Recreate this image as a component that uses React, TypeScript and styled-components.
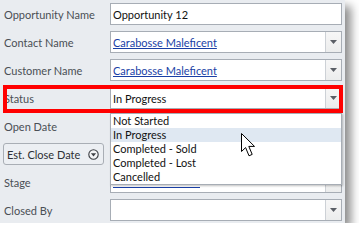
import React from "react";
import styled, { createGlobalStyle } from "styled-components";

const Global = createGlobalStyle`
  html, body { margin: 0; padding: 0; background: #ffffff; }
  body { font-family: "Lato", "Open Sans", sans-serif; }
`;

const Panel = styled.div`
  position: relative;
  width: 345px;
  height: 223px;
  box-sizing: border-box;
  background: #e9ecf0;
  box-shadow: 6px 6px 9px rgba(0, 0, 0, 0.45);
  padding: 3px 3px 0 3px;
  display: grid;
  grid-template-columns: 107px 232px;
  grid-auto-rows: 22px;
  row-gap: 6px;
  align-items: center;
  font-size: 11px;
`;

const Label = styled.div`
  color: #4a4f55;
  white-space: nowrap;
  padding-left: 1px;
`;

const Field = styled.div`
  height: 22px;
  box-sizing: border-box;
  border: 1px solid #a7adb5;
  background: #ffffff;
  display: flex;
  align-items: center;
`;

const Value = styled.span<{ $link?: boolean }>`
  flex: 1;
  padding-left: 2px;
  color: ${(p) => (p.$link ? "#1a3fa6" : "#111")};
  text-decoration: ${(p) => (p.$link ? "underline" : "none")};
  white-space: nowrap;
  overflow: hidden;
`;

const HiddenLink = styled.span`
  display: block;
  width: 87px;
  height: 11px;
  margin-left: 2px;
  border-bottom: 1px solid #1a3fa6;
`;

const DropButton = styled.div`
  width: 15px;
  height: 100%;
  border-left: 1px solid #cdd1d6;
  background: linear-gradient(#f7f7f7, #eceded);
  display: flex;
  align-items: center;
  justify-content: center;
`;

const Spacer = styled.div`
  flex: 1;
`;

const DateButton = styled.div`
  width: 101px;
  height: 22px;
  box-sizing: border-box;
  border: 1px solid #a9aeb5;
  border-radius: 3px;
  background: #eceff3;
  display: flex;
  align-items: center;
  justify-content: space-between;
  padding: 0 4px 0 3px;
  color: #2d3035;
  white-space: nowrap;
`;

const Highlight = styled.div`
  position: absolute;
  left: 3px;
  top: 85px;
  width: 340px;
  height: 28px;
  box-sizing: border-box;
  border: 4px solid #ff0000;
  pointer-events: none;
`;

const List = styled.div`
  position: absolute;
  left: 110px;
  top: 113px;
  width: 232px;
  height: 72px;
  box-sizing: border-box;
  border: 1px solid #a7adb5;
  background: #ffffff;
  box-shadow: 1px 1px 2px rgba(0, 0, 0, 0.25);
  display: flex;
  flex-direction: column;
`;

const Item = styled.div<{ $active?: boolean }>`
  height: 14px;
  line-height: 14px;
  padding-left: 2px;
  color: #111;
  background: ${(p) => (p.$active ? "#dfe8f2" : "transparent")};
  white-space: nowrap;
`;

const Cursor = styled.svg`
  position: absolute;
  left: 241px;
  top: 133px;
`;

const Arrow = () => (
  <svg width="7" height="4" viewBox="0 0 7 4">
    <path d="M0 0 H7 L3.5 4 Z" fill="#5b5f66" />
  </svg>
);

const Combo = ({ children }: { children?: React.ReactNode }) => (
  <Field>
    {children ?? <Spacer />}
    <DropButton>
      <Arrow />
    </DropButton>
  </Field>
);

export default function App() {
  return (
    <>
      <Global />
      <Panel>
        <Label>Opportunity Name</Label>
        <Field>
          <Value>Opportunity 12</Value>
        </Field>

        <Label>Contact Name</Label>
        <Combo>
          <Value $link>Carabosse Maleficent</Value>
        </Combo>

        <Label>Customer Name</Label>
        <Combo>
          <Value $link>Carabosse Maleficent</Value>
        </Combo>

        <Label>Status</Label>
        <Combo>
          <Value>In Progress</Value>
        </Combo>

        <Label>Open Date</Label>
        <Field />

        <DateButton>
          <span>Est. Close Date</span>
          <svg width="11" height="11" viewBox="0 0 11 11">
            <circle cx="5.5" cy="5.5" r="4.7" fill="#f4f5f7" stroke="#3c3f44" strokeWidth="1.1" />
            <path d="M2.9 4.2 H8.1 L5.5 7.4 Z" fill="#3c3f44" />
          </svg>
        </DateButton>
        <Field />

        <Label>Stage</Label>
        <Combo>
          <Spacer>
            <HiddenLink />
          </Spacer>
        </Combo>

        <Label>Closed By</Label>
        <Combo />

        <Highlight />

        <List>
          <Item>Not Started</Item>
          <Item $active>In Progress</Item>
          <Item>Completed - Sold</Item>
          <Item>Completed - Lost</Item>
          <Item>Cancelled</Item>
        </List>

        <Cursor width="17" height="26" viewBox="0 0 17 26">
          <path
            d="M0.5 0.5 L0.5 18.5 L4.6 14.6 L8 22.8 L11.2 21.4 L7.8 13.4 L13.5 13.4 Z"
            fill="#ffffff"
            stroke="#000000"
            strokeWidth="1"
            strokeLinejoin="miter"
          />
        </Cursor>
      </Panel>
    </>
  );
}
